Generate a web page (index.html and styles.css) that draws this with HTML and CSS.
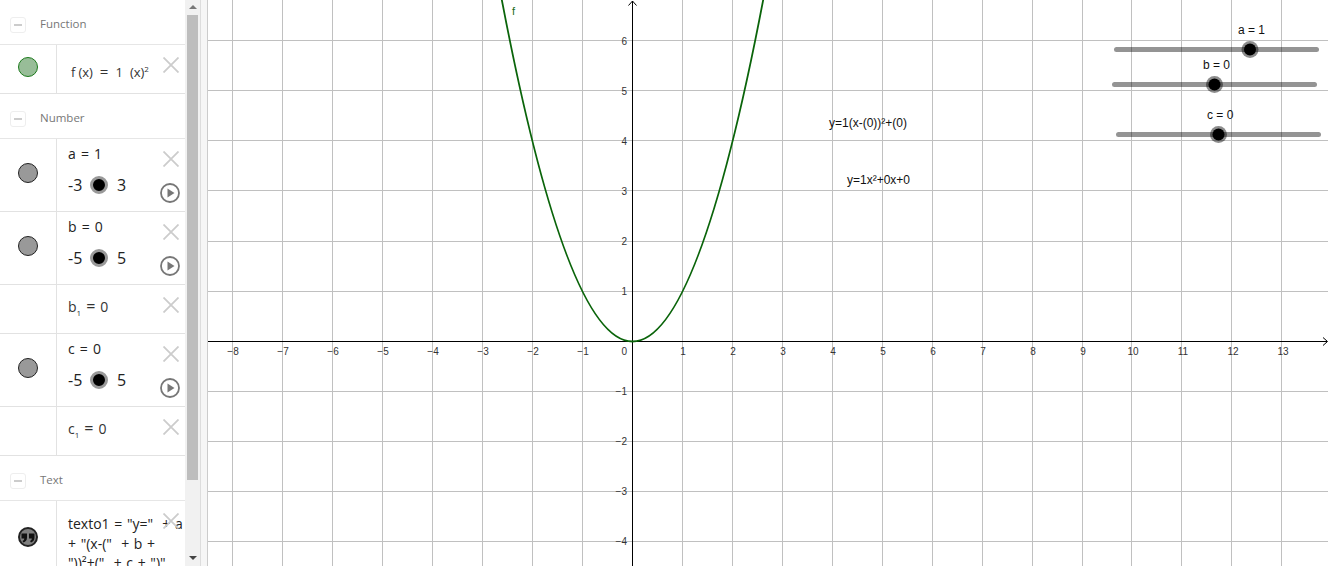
FILE: index.html
```html
<!DOCTYPE html>
<html lang="en">
<head>
<meta charset="utf-8">
<title>GeoGebra graph</title>
<link rel="stylesheet" href="styles.css">
</head>
<body>
<div class="app">
  <aside class="algebra">
    <div class="list">
      <div class="head"><span class="toggle"><i></i></span><span class="head-label">Function</span></div>
      <div class="row row-short">
        <div class="marble-col"><span class="marble marble-green"></span></div>
        <div class="body func"><span>f</span><span class="thin">(x)</span><span class="eq">=</span><span>1</span><span class="pow">(x)<sup>2</sup></span></div>
        <div class="actions"><svg class="x" viewBox="0 0 16 16"><path d="M0.5 0.5L15.5 15.5M15.5 0.5L0.5 15.5"/></svg></div>
      </div>

      <div class="head"><span class="toggle"><i></i></span><span class="head-label">Number</span></div>
      <div class="row row-tall">
        <div class="marble-col"><span class="marble"></span></div>
        <div class="body">
          <div class="val">a = 1</div>
          <div class="slider"><span class="lo">-3</span><span class="knob"></span><span>3</span></div>
        </div>
        <div class="actions">
          <svg class="x" viewBox="0 0 16 16"><path d="M0.5 0.5L15.5 15.5M15.5 0.5L0.5 15.5"/></svg>
          <svg class="play" viewBox="0 0 20 20"><circle cx="10" cy="10" r="9"/><path d="M7.5 5.5L14.5 10L7.5 14.5Z"/></svg>
        </div>
      </div>
      <div class="row row-tall">
        <div class="marble-col"><span class="marble"></span></div>
        <div class="body">
          <div class="val">b = 0</div>
          <div class="slider"><span class="lo">-5</span><span class="knob"></span><span>5</span></div>
        </div>
        <div class="actions">
          <svg class="x" viewBox="0 0 16 16"><path d="M0.5 0.5L15.5 15.5M15.5 0.5L0.5 15.5"/></svg>
          <svg class="play" viewBox="0 0 20 20"><circle cx="10" cy="10" r="9"/><path d="M7.5 5.5L14.5 10L7.5 14.5Z"/></svg>
        </div>
      </div>
      <div class="row row-short">
        <div class="marble-col"></div>
        <div class="body dep">b<sub>1</sub><span class="eq-s">=</span>0</div>
        <div class="actions"><svg class="x" viewBox="0 0 16 16"><path d="M0.5 0.5L15.5 15.5M15.5 0.5L0.5 15.5"/></svg></div>
      </div>
      <div class="row row-tall">
        <div class="marble-col"><span class="marble"></span></div>
        <div class="body">
          <div class="val">c = 0</div>
          <div class="slider"><span class="lo">-5</span><span class="knob"></span><span>5</span></div>
        </div>
        <div class="actions">
          <svg class="x" viewBox="0 0 16 16"><path d="M0.5 0.5L15.5 15.5M15.5 0.5L0.5 15.5"/></svg>
          <svg class="play" viewBox="0 0 20 20"><circle cx="10" cy="10" r="9"/><path d="M7.5 5.5L14.5 10L7.5 14.5Z"/></svg>
        </div>
      </div>
      <div class="row row-short">
        <div class="marble-col"></div>
        <div class="body dep">c<sub>1</sub><span class="eq-s">=</span>0</div>
        <div class="actions"><svg class="x" viewBox="0 0 16 16"><path d="M0.5 0.5L15.5 15.5M15.5 0.5L0.5 15.5"/></svg></div>
      </div>

      <div class="head"><span class="toggle"><i></i></span><span class="head-label">Text</span></div>
      <div class="row row-text">
        <div class="marble-col"><span class="marble marble-quote"><svg viewBox="2 3 16 16"><path d="M3.500 7.500H9V11.500C9 14.500 7.500 15.500 5.500 16.500L4.500 15C5.800 14.400 6.300 13.600 6.300 12.500H3.500ZM11 7.500H16.500V11.500C16.500 14.500 15 15.500 13 16.500L12 15C13.300 14.400 13.800 13.600 13.800 12.500H11Z"/></svg></span></div>
        <div class="body code">
          <div class="line">texto1 = "y=" &nbsp;+ a</div>
          <div class="line">+ "(x-(" &nbsp;+ b +</div>
          <div class="line">"))²+(" &nbsp;+ c + ")"</div>
        </div>
        <div class="actions"><svg class="x" viewBox="0 0 16 16"><path d="M0.5 0.5L15.5 15.5M15.5 0.5L0.5 15.5"/></svg></div>
      </div>
    </div>
    <div class="scrollbar">
      <span class="arrow-up"></span>
      <div class="track"><span class="thumb"></span></div>
      <span class="arrow-down"></span>
    </div>
  </aside>
  <div class="divider"></div>
  <svg class="graph" viewBox="208 0 1120 566" width="1120" height="566">
    <g class="grid">
      <path d="M232.500 0V566M282.500 0V566M332.500 0V566M382.500 0V566M432.500 0V566M482.500 0V566M532.500 0V566M582.500 0V566M682.500 0V566M732.500 0V566M782.500 0V566M832.500 0V566M882.500 0V566M932.500 0V566M982.500 0V566M1032.500 0V566M1082.500 0V566M1131.500 0V566M1181.500 0V566M1231.500 0V566M1281.500 0V566"/>
      <path d="M208 40.500H1328M208 90.500H1328M208 140.500H1328M208 190.500H1328M208 241.500H1328M208 291.500H1328M208 391.500H1328M208 441.500H1328M208 491.500H1328M208 541.500H1328"/>
    </g>
    <g class="axis">
      <path d="M208 341.500H1327M632.500 566V1"/>
      <path d="M1323 337.500L1327.500 341.500L1323 345.500M628.500 5.500L632.500 1L636.500 5.500"/>
    </g>
    <g class="tick-labels x-labels">
      <text x="233" y="355">−8</text><text x="283" y="355">−7</text><text x="333" y="355">−6</text><text x="383" y="355">−5</text><text x="433" y="355">−4</text><text x="483" y="355">−3</text><text x="533" y="355">−2</text><text x="583" y="355">−1</text>
      <text x="683" y="355">1</text><text x="733" y="355">2</text><text x="783" y="355">3</text><text x="833" y="355">4</text><text x="883" y="355">5</text><text x="933" y="355">6</text><text x="983" y="355">7</text><text x="1033" y="355">8</text><text x="1083" y="355">9</text><text x="1133" y="355">10</text><text x="1183" y="355">11</text><text x="1233" y="355">12</text><text x="1283" y="355">13</text>
    </g>
    <g class="tick-labels y-labels">
      <text x="627" y="45">6</text><text x="627" y="95">5</text><text x="627" y="145">4</text><text x="627" y="195">3</text><text x="627" y="245">2</text><text x="627" y="295">1</text><text x="627" y="355">0</text><text x="627" y="395">−1</text><text x="627" y="445">−2</text><text x="627" y="495">−3</text><text x="627" y="545">−4</text>
    </g>
    <path class="curve" d="M495 -36.600Q632.500 719.600 770 -36.600"/>
    <text class="curve-label" x="512" y="15">f</text>
    <text class="note" x="829" y="127">y=1(x-(0))²+(0)</text>
    <text class="note" x="847" y="184">y=1x²+0x+0</text>
    <g class="gslider">
      <text x="1238" y="34">a = 1</text>
      <path d="M1116.500 49.500H1316.500"/>
      <circle class="ring" cx="1250" cy="49.500" r="8.500"/><circle class="dot" cx="1250" cy="49.500" r="6"/>
    </g>
    <g class="gslider">
      <text x="1203" y="69">b = 0</text>
      <path d="M1114.500 84.500H1314.500"/>
      <circle class="ring" cx="1214.500" cy="84.500" r="8.500"/><circle class="dot" cx="1214.500" cy="84.500" r="6"/>
    </g>
    <g class="gslider">
      <text x="1207" y="119">c = 0</text>
      <path d="M1118.500 134.500H1318.500"/>
      <circle class="ring" cx="1218.500" cy="134.500" r="8.500"/><circle class="dot" cx="1218.500" cy="134.500" r="6"/>
    </g>
  </svg>
</div>
</body>
</html>
```

FILE: styles.css
```css
* { box-sizing: border-box; }
html, body { margin: 0; padding: 0; background: #fff; overflow: hidden; }
body { width: 1330px; height: 568px; font-family: "Open Sans", "Liberation Sans", sans-serif; color: #222; }
.app { display: flex; height: 566px; width: 1328px; }

.algebra { display: flex; width: 200px; flex: none; height: 566px; overflow: hidden; }
.list { width: 185px; flex: none; overflow: hidden; background: #fff; }

.head { height: 45px; border-bottom: 1px solid #e6e6e6; display: flex; align-items: flex-start; padding: 17px 0 0 10px; }
.toggle { width: 16px; height: 16px; border: 1px solid #eee; border-radius: 3px; display: flex; align-items: center; justify-content: center; }
.toggle i { display: block; width: 8px; height: 2px; background: #ccc; }
.head-label { margin-left: 14px; font-size: 11.500px; line-height: 14px; color: #777; }

.row { display: flex; position: relative; border-bottom: 1px solid #e2e2e2; }
.row-short { height: 49px; }
.row-tall { height: 73px; }
.row-text { height: 70px; border-bottom: 0; }
.marble-col { width: 57px; flex: none; border-right: 1px solid #e2e2e2; display: flex; align-items: center; justify-content: center; padding-bottom: 4px; }
.marble { width: 20px; height: 20px; border-radius: 50%; background: #999; border: 1px solid #222; display: block; }
.marble-green { background: #98bd98; border-color: #1c7a1c; }
.marble-quote { background: #7f7f7f; border: 2px solid #222; }
.marble-quote svg { display: block; width: 16px; height: 16px; fill: #111; }
.row-text .marble-col { align-items: flex-start; padding: 26px 0 0; }

.body { flex: 1; min-width: 0; padding-left: 11px; font-size: 14px; line-height: 18px; color: #222; white-space: nowrap; }
.val { padding-top: 6px; height: 24px; word-spacing: 1.500px; }
.slider { display: flex; align-items: center; height: 22px; margin-top: 11px; font-size: 16px; }
.slider .lo { width: 19px; }
.knob { width: 18px; height: 18px; border-radius: 50%; background: #000; border: 3.500px solid #999; margin: 0 9px 0 3px; }

.func { padding: 17px 0 0 14px; font-size: 13px; color: #333; }
.func .thin { margin: 0 7px 0 3px; }
.func .eq { margin-right: 7px; font-size: 15px; }
.func .pow { margin-left: 7px; }
.func sup { font-size: 8px; line-height: 0; }
.dep { padding-top: 12px; font-size: 14px; color: #333; }
.dep sub { font-size: 8px; line-height: 0; }
.eq-s { margin: 0 5px; font-size: 16px; }
.code { padding-top: 13px; font-size: 14px; line-height: 19.500px; color: #222; word-spacing: 1px; }

.actions { position: absolute; right: 5px; top: 12px; width: 18px; display: flex; flex-direction: column; align-items: center; }
.x { width: 16px; height: 16px; flex: none; }
.x path { stroke: #ccc; stroke-width: 1.800; fill: none; }
.play { width: 20px; height: 20px; flex: none; margin-top: 16px; margin-left: -2px; }
.play circle { fill: #fff; stroke: #777; stroke-width: 1.800; }
.play path { fill: #777; }

.scrollbar { width: 15px; flex: none; background: #f1f1f1; display: flex; flex-direction: column; align-items: center; }
.arrow-up, .arrow-down { flex: none; width: 0; height: 0; border-left: 4px solid transparent; border-right: 4px solid transparent; }
.arrow-up { border-bottom: 4px solid #777; margin: 5px 0 6px; }
.arrow-down { border-top: 4px solid #444; margin: 6px 0 6px; }
.track { flex: 1; width: 100%; display: flex; justify-content: center; align-items: flex-start; }
.thumb { width: 11px; height: 465px; background: #bdbdbd; display: block; }

.divider { width: 8px; flex: none; background: #f6f6f6; border-left: 1px solid #ddd; border-right: 1px solid #ccc; }

.graph { display: block; flex: none; font-family: "Liberation Sans", Arial, sans-serif; }
.grid path { stroke: #c0c0c0; stroke-width: 1; fill: none; }
.axis path { stroke: #000; stroke-width: 1; fill: none; }
.tick-labels text { font-size: 10px; fill: #333; }
.x-labels text { text-anchor: middle; }
.y-labels text { text-anchor: end; }
.curve { fill: none; stroke: #0a640a; stroke-width: 1.800; }
.curve-label { font-size: 11px; fill: #1a6b1a; }
.note { font-size: 12px; fill: #111; }
.gslider text { font-size: 12px; fill: #111; }
.gslider path { stroke: #000; stroke-opacity: .42; stroke-width: 5; stroke-linecap: round; fill: none; }
.gslider .ring { fill: #000; fill-opacity: .45; }
.gslider .dot { fill: #000; }
```
